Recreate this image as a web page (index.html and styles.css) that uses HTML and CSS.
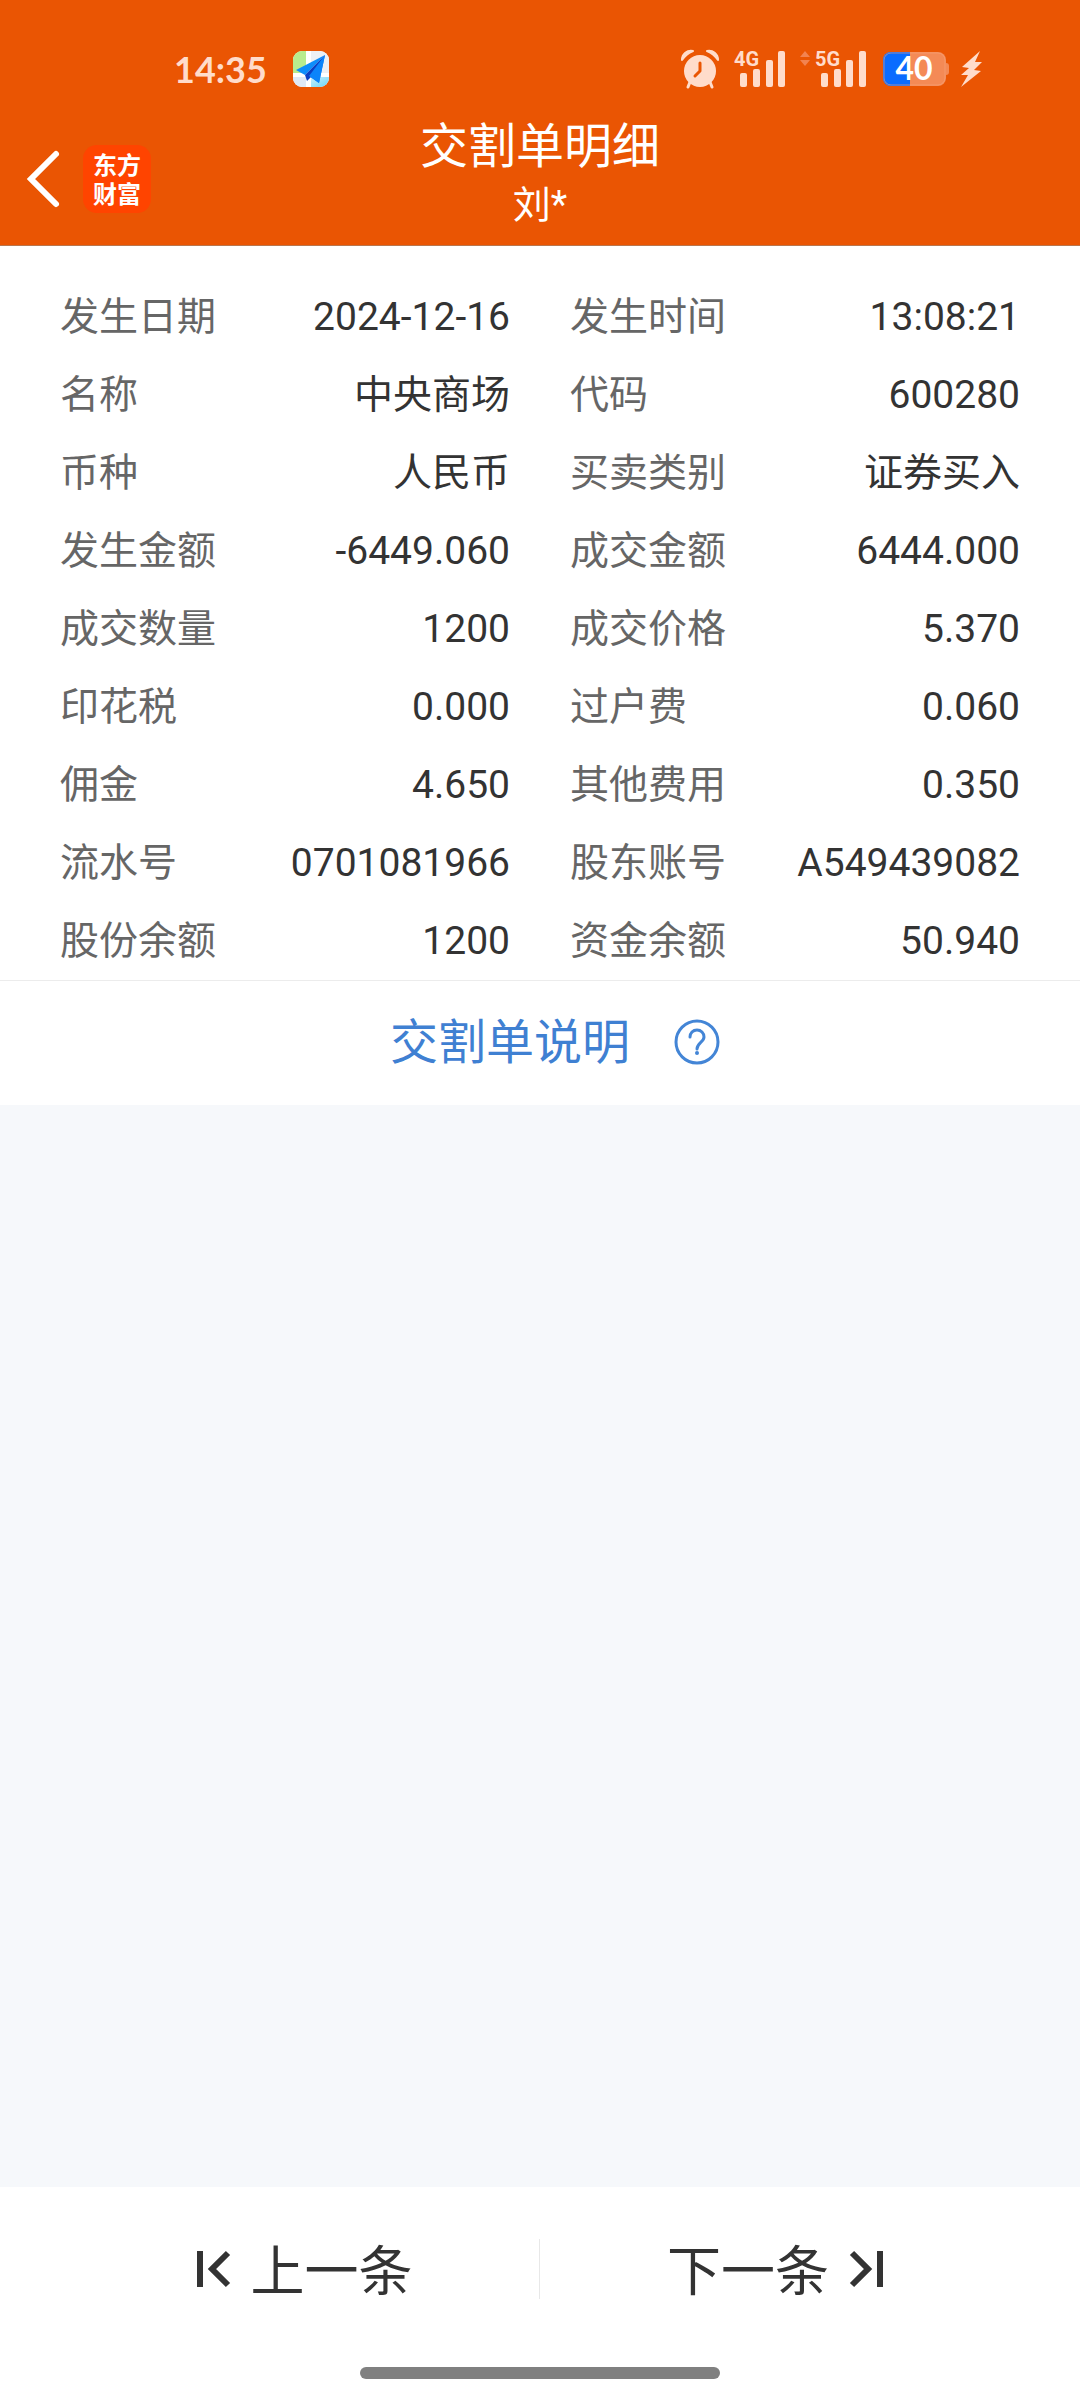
FILE: index.html
```html
<!DOCTYPE html>
<html lang="zh-CN">
<head>
<meta charset="utf-8">
<meta name="viewport" content="width=device-width, initial-scale=1">
<title>交割单明细</title>
<link rel="stylesheet" href="styles.css">
</head>
<body>
<header class="top">
  <div class="status">
    <span class="clock">14:35</span>
    <svg class="map-icon" width="36" height="36" viewBox="0 0 36 36" aria-hidden="true">
      <defs>
        <clipPath id="tile"><rect width="36" height="36" rx="9"/></clipPath>
        <linearGradient id="water" x1="0" y1="0" x2="1" y2="1"><stop offset="0" stop-color="#c9f0fb"/><stop offset="1" stop-color="#6ad4f7"/></linearGradient>
      </defs>
      <g clip-path="url(#tile)">
        <rect width="36" height="36" fill="#fff"/>
        <path d="M0 0H13V22H0z" fill="#b9ec8e"/>
        <path d="M18 0H36V22H18z" fill="#edf0f4"/>
        <path d="M0 26H13V36H0z" fill="#dfe9f6"/>
        <path d="M18 26H36V36H18z" fill="url(#water)"/>
        <path d="M32 4 3 19l9 5z" fill="#0d8dfb"/>
        <path d="M32 4 26 32 16 25z" fill="#087cf5"/>
        <path d="M32 4 12 24l2 6 4-4z" fill="#0a3fc4"/>
        <path d="M32 4 16 25l10 7z" fill="#0b84fa"/>
      </g>
    </svg>
    <div class="indicators">
      <svg width="38" height="38" viewBox="0 0 38 38" fill="#ffdccb" aria-hidden="true">
        <circle cx="19" cy="21" r="16"/>
        <path d="M1 10A9 9 0 0 1 12 1Q5 4 1 10zM37 10A9 9 0 0 0 26 1Q33 4 37 10z" stroke="#ffdccb" stroke-width="2" stroke-linejoin="round"/>
        <path d="M9 32 7 37M29 32l2 5" stroke="#ffdccb" stroke-width="3" stroke-linecap="round"/>
        <path d="M19 13v8l-5 5" fill="none" stroke="#ea5503" stroke-width="3" stroke-linecap="round" stroke-linejoin="round"/>
      </svg>
      <svg class="signal" width="52" height="38" viewBox="0 0 52 38" fill="#ffdccb" role="img" aria-label="4G">
        <text class="net" x="0" y="16">4G</text>
        <rect x="6" y="23" width="7" height="14" rx="2"/><rect x="19" y="19" width="7" height="18" rx="2"/><rect x="32" y="10" width="7" height="27" rx="2"/><rect x="44" y="1" width="7" height="36" rx="2"/>
      </svg>
      <svg class="signal-second" width="68" height="38" viewBox="0 0 68 38" fill="#ffdccb" role="img" aria-label="5G">
        <path d="M0 7 5 1l5 6zM0 10 5 16l5-6z" fill="#f28350"/>
        <text class="net" x="15" y="16">5G</text>
        <rect x="21" y="23" width="7" height="14" rx="2"/><rect x="34" y="19" width="7" height="18" rx="2"/><rect x="46" y="10" width="7" height="27" rx="2"/><rect x="59" y="1" width="7" height="36" rx="2"/>
      </svg>
      <svg width="66" height="34" viewBox="0 0 66 34" role="img" aria-label="40%">
        <defs><clipPath id="cell"><rect width="63" height="34" rx="8"/></clipPath></defs>
        <g clip-path="url(#cell)"><rect width="63" height="34" fill="#f48a56"/><rect width="27" height="34" fill="#0a6cff"/></g>
        <path d="M63 11q3 0 3 3v6q0 3-3 3z" fill="#f48a56"/>
        <rect x="1" y="1" width="61" height="32" rx="7" fill="none" stroke="#f7a57d" stroke-opacity=".6"/>
        <text class="charge" x="31" y="28">40</text>
      </svg>
      <svg class="bolt" width="22" height="36" viewBox="0 0 22 36" aria-hidden="true"><path d="M20 0 2 16l7 1-8 7 7 0-7 12L21 20l-7-1 8-8-7 0z" fill="#ffdccb"/></svg>
    </div>
  </div>
  <div class="nav">
    <div class="nav-left">
      <button class="back" type="button" aria-label="返回">
        <svg width="34" height="56" viewBox="0 0 34 56" aria-hidden="true"><path d="M29 3 4 28l25 25" fill="none" stroke="#fff" stroke-width="6" stroke-linecap="round"/></svg>
      </button>
      <div class="logo">东方<br>财富</div>
    </div>
    <div class="heading">
      <h1 class="title">交割单明细</h1>
      <p class="holder">刘*</p>
    </div>
  </div>
</header>

<main class="content">
  <dl class="details">
    <div class="item"><dt>发生日期</dt><dd>2024-12-16</dd></div>
    <div class="item"><dt>发生时间</dt><dd>13:08:21</dd></div>
    <div class="item"><dt>名称</dt><dd>中央商场</dd></div>
    <div class="item"><dt>代码</dt><dd>600280</dd></div>
    <div class="item"><dt>币种</dt><dd>人民币</dd></div>
    <div class="item"><dt>买卖类别</dt><dd>证券买入</dd></div>
    <div class="item"><dt>发生金额</dt><dd>-6449.060</dd></div>
    <div class="item"><dt>成交金额</dt><dd>6444.000</dd></div>
    <div class="item"><dt>成交数量</dt><dd>1200</dd></div>
    <div class="item"><dt>成交价格</dt><dd>5.370</dd></div>
    <div class="item"><dt>印花税</dt><dd>0.000</dd></div>
    <div class="item"><dt>过户费</dt><dd>0.060</dd></div>
    <div class="item"><dt>佣金</dt><dd>4.650</dd></div>
    <div class="item"><dt>其他费用</dt><dd>0.350</dd></div>
    <div class="item"><dt>流水号</dt><dd>0701081966</dd></div>
    <div class="item"><dt>股东账号</dt><dd>A549439082</dd></div>
    <div class="item"><dt>股份余额</dt><dd>1200</dd></div>
    <div class="item"><dt>资金余额</dt><dd>50.940</dd></div>
  </dl>
  <a class="explain" href="#">
    <span>交割单说明</span>
    <svg width="46" height="46" viewBox="0 0 46 46" fill="none" stroke="#4385d6" aria-hidden="true">
      <circle cx="23" cy="22" r="21" stroke-width="3"/>
      <path d="M16 17c0-4 3-7 7-7s7 3 7 7c0 5-7 6-7 12" stroke-width="3" stroke-linecap="round"/>
      <circle cx="23" cy="33" r="2" fill="#4385d6" stroke="none"/>
    </svg>
  </a>
</main>

<footer class="bottom">
  <nav class="pager">
    <button class="page prev" type="button">
      <svg width="34" height="36" viewBox="0 0 34 36" fill="none" stroke="#333" aria-hidden="true"><path d="M3 0v36" stroke-width="6"/><path d="M31 2 15 18l16 16" stroke-width="6"/></svg>
      <span class="page-label">上一条</span>
    </button>
    <button class="page next" type="button">
      <span class="page-label">下一条</span>
      <svg width="34" height="36" viewBox="0 0 34 36" fill="none" stroke="#333" aria-hidden="true"><path d="M31 0v36" stroke-width="6"/><path d="M3 2l16 16L3 34" stroke-width="6"/></svg>
    </button>
  </nav>
  <div class="home-bar"></div>
</footer>
</body>
</html>
```

FILE: styles.css
```css
* { box-sizing: border-box; }

body {
  margin: 0;
  min-height: 100vh;
  display: flex;
  flex-direction: column;
  background: #f6f8fb;
  color: #333;
  font-family: Roboto, "Noto Sans CJK SC", sans-serif;
}

h1, p, dl, dd { margin: 0; }

button {
  border: 0;
  padding: 0;
  background: none;
  color: inherit;
  font: inherit;
  cursor: pointer;
}

svg { display: block; flex: none; overflow: visible; }

/* Header */
.top {
  background: #ea5503;
  color: #fff;
  border-bottom: 1px solid #b9764d;
}

.status {
  padding: 50px 98px 24px 174px;
  display: flex;
  align-items: center;
}

.clock {
  color: #ffdccb;
  font: 700 36px/34px Lato, sans-serif;
}

.map-icon { margin-left: 26px; }

.indicators {
  margin-left: auto;
  display: flex;
  align-items: center;
}

.signal { margin: 0 14px 0 15px; }
.signal-second { margin-right: 15px; }
.bolt { margin-left: 11px; }
.net { font: 700 20px Roboto, sans-serif; }
.charge { font: 700 32px Lato, sans-serif; fill: #fff; text-anchor: middle; }

.nav {
  display: grid;
  grid-template-columns: 1fr auto 1fr;
  align-items: center;
  padding: 9px 0 8px;
}

.nav-left {
  display: flex;
  align-items: center;
  gap: 22px;
  padding-left: 27px;
}

.logo {
  width: 68px;
  padding: 4px 0 6px;
  border-radius: 14px;
  background: #ff4400;
  text-align: center;
  font: 700 24px/29px "Noto Sans CJK SC", sans-serif;
}

.heading { text-align: center; }

.title {
  font-size: 48px;
  font-weight: 400;
  line-height: 52px;
}

.holder {
  font-size: 38px;
  line-height: 64px;
}

/* Record details */
.content { background: #fff; }

.details {
  display: grid;
  grid-template-columns: 1fr 1fr;
  column-gap: 60px;
  padding: 32px 60px 0;
  border-bottom: 1px solid #ececec;
}

.item {
  display: flex;
  justify-content: space-between;
  line-height: 78px;
  font-size: 39px;
}

.item dt { color: #666; }

.explain {
  display: flex;
  justify-content: center;
  align-items: center;
  gap: 44px;
  padding-left: 30px;
  color: #3f80d2;
  font-size: 48px;
  line-height: 124px;
  text-decoration: none;
}

/* Pager */
.bottom {
  margin-top: auto;
  background: #fff;
}

.pager {
  display: grid;
  grid-template-columns: 1fr 1fr;
  padding: 52px 70px;
}

.page {
  display: flex;
  justify-content: center;
  align-items: center;
  gap: 20px;
  font-size: 54px;
  line-height: 52px;
}

.page-label { padding-top: 8px; }

.prev { border-right: 1px solid #e8e8e8; }

.home-bar {
  width: 33.3333%;
  height: 12px;
  margin: 16px auto 21px;
  border-radius: 6px;
  background: #808080;
}
```
